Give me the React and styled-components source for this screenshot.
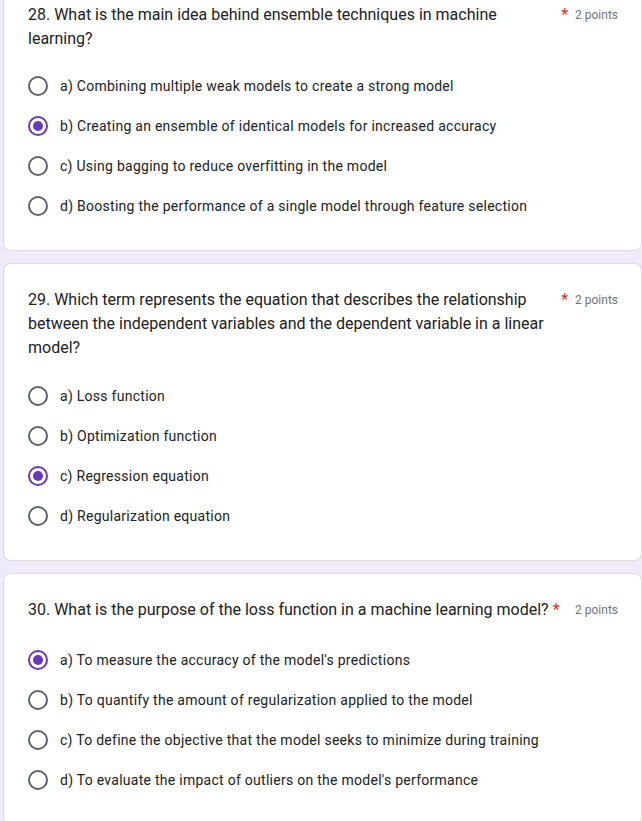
import React from "react";
import styled, { createGlobalStyle } from "styled-components";

const Global = createGlobalStyle`
  html, body { margin: 0; padding: 0; background: #f0ebf8; }
  body { font-family: Roboto, "Liberation Sans", Arial, sans-serif; overflow: hidden; }
  * { box-sizing: border-box; }
`;

const Page = styled.div`
  display: flex;
  flex-direction: column;
  gap: 12px;
  padding-left: 3px;
  margin-top: -22px;
`;

const Card = styled.section`
  background: #fff;
  border: 1px solid #dadce0;
  border-radius: 8px;
  padding: 24px 23px 24px 24px;
  display: flex;
  flex-direction: column;
`;

const Header = styled.div`
  display: flex;
  align-items: flex-start;
  margin-bottom: ${(p) => p.$gap}px;
`;

const TitleWrap = styled.div`
  flex: 1;
  display: flex;
  align-items: flex-start;
  min-width: 0;
`;

const Title = styled.span`
  font-size: 16px;
  line-height: 24px;
  color: #202124;
`;

const Star = styled.span`
  font-size: 16px;
  line-height: 24px;
  color: #d93025;
  padding-left: 4px;
  flex-shrink: 0;
`;

const Points = styled.span`
  font-size: 12px;
  line-height: 24px;
  color: #70757a;
  margin-left: 7px;
  flex-shrink: 0;
`;

const Options = styled.div`
  display: flex;
  flex-direction: column;
`;

const Option = styled.label`
  display: flex;
  align-items: center;
  height: 40px;
  gap: 12px;
`;

const Radio = styled.span`
  width: 20px;
  height: 20px;
  border-radius: 50%;
  border: 2px solid ${(p) => (p.$checked ? "#673ab7" : "#5f6368")};
  display: flex;
  align-items: center;
  justify-content: center;
  flex-shrink: 0;
  &::after {
    content: "";
    width: 10px;
    height: 10px;
    border-radius: 50%;
    background: #673ab7;
    display: ${(p) => (p.$checked ? "block" : "none")};
  }
`;

const OptionText = styled.span`
  font-size: 14px;
  line-height: 20px;
  color: #202124;
  letter-spacing: 0.27px;
`;

const questions = [
  {
    title: "28. What is the main idea behind ensemble techniques in machine learning?",
    gap: 15,
    checked: 1,
    options: [
      "a) Combining multiple weak models to create a strong model",
      "b) Creating an ensemble of identical models for increased accuracy",
      "c) Using bagging to reduce overfitting in the model",
      "d) Boosting the performance of a single model through feature selection",
    ],
  },
  {
    title:
      "29. Which term represents the equation that describes the relationship between the independent variables and the dependent variable in a linear model?",
    gap: 16,
    checked: 2,
    options: [
      "a) Loss function",
      "b) Optimization function",
      "c) Regression equation",
      "d) Regularization equation",
    ],
  },
  {
    title: "30. What is the purpose of the loss function in a machine learning model?",
    gap: 18,
    checked: 0,
    options: [
      "a) To measure the accuracy of the model's predictions",
      "b) To quantify the amount of regularization applied to the model",
      "c) To define the objective that the model seeks to minimize during training",
      "d) To evaluate the impact of outliers on the model's performance",
    ],
  },
];

export default function App() {
  return (
    <>
      <Global />
      <Page>
        {questions.map((q) => (
          <Card key={q.title}>
            <Header $gap={q.gap}>
              <TitleWrap>
                <Title>{q.title}</Title>
                <Star>*</Star>
              </TitleWrap>
              <Points>2 points</Points>
            </Header>
            <Options>
              {q.options.map((o, i) => (
                <Option key={o}>
                  <Radio $checked={i === q.checked} />
                  <OptionText>{o}</OptionText>
                </Option>
              ))}
            </Options>
          </Card>
        ))}
      </Page>
    </>
  );
}
